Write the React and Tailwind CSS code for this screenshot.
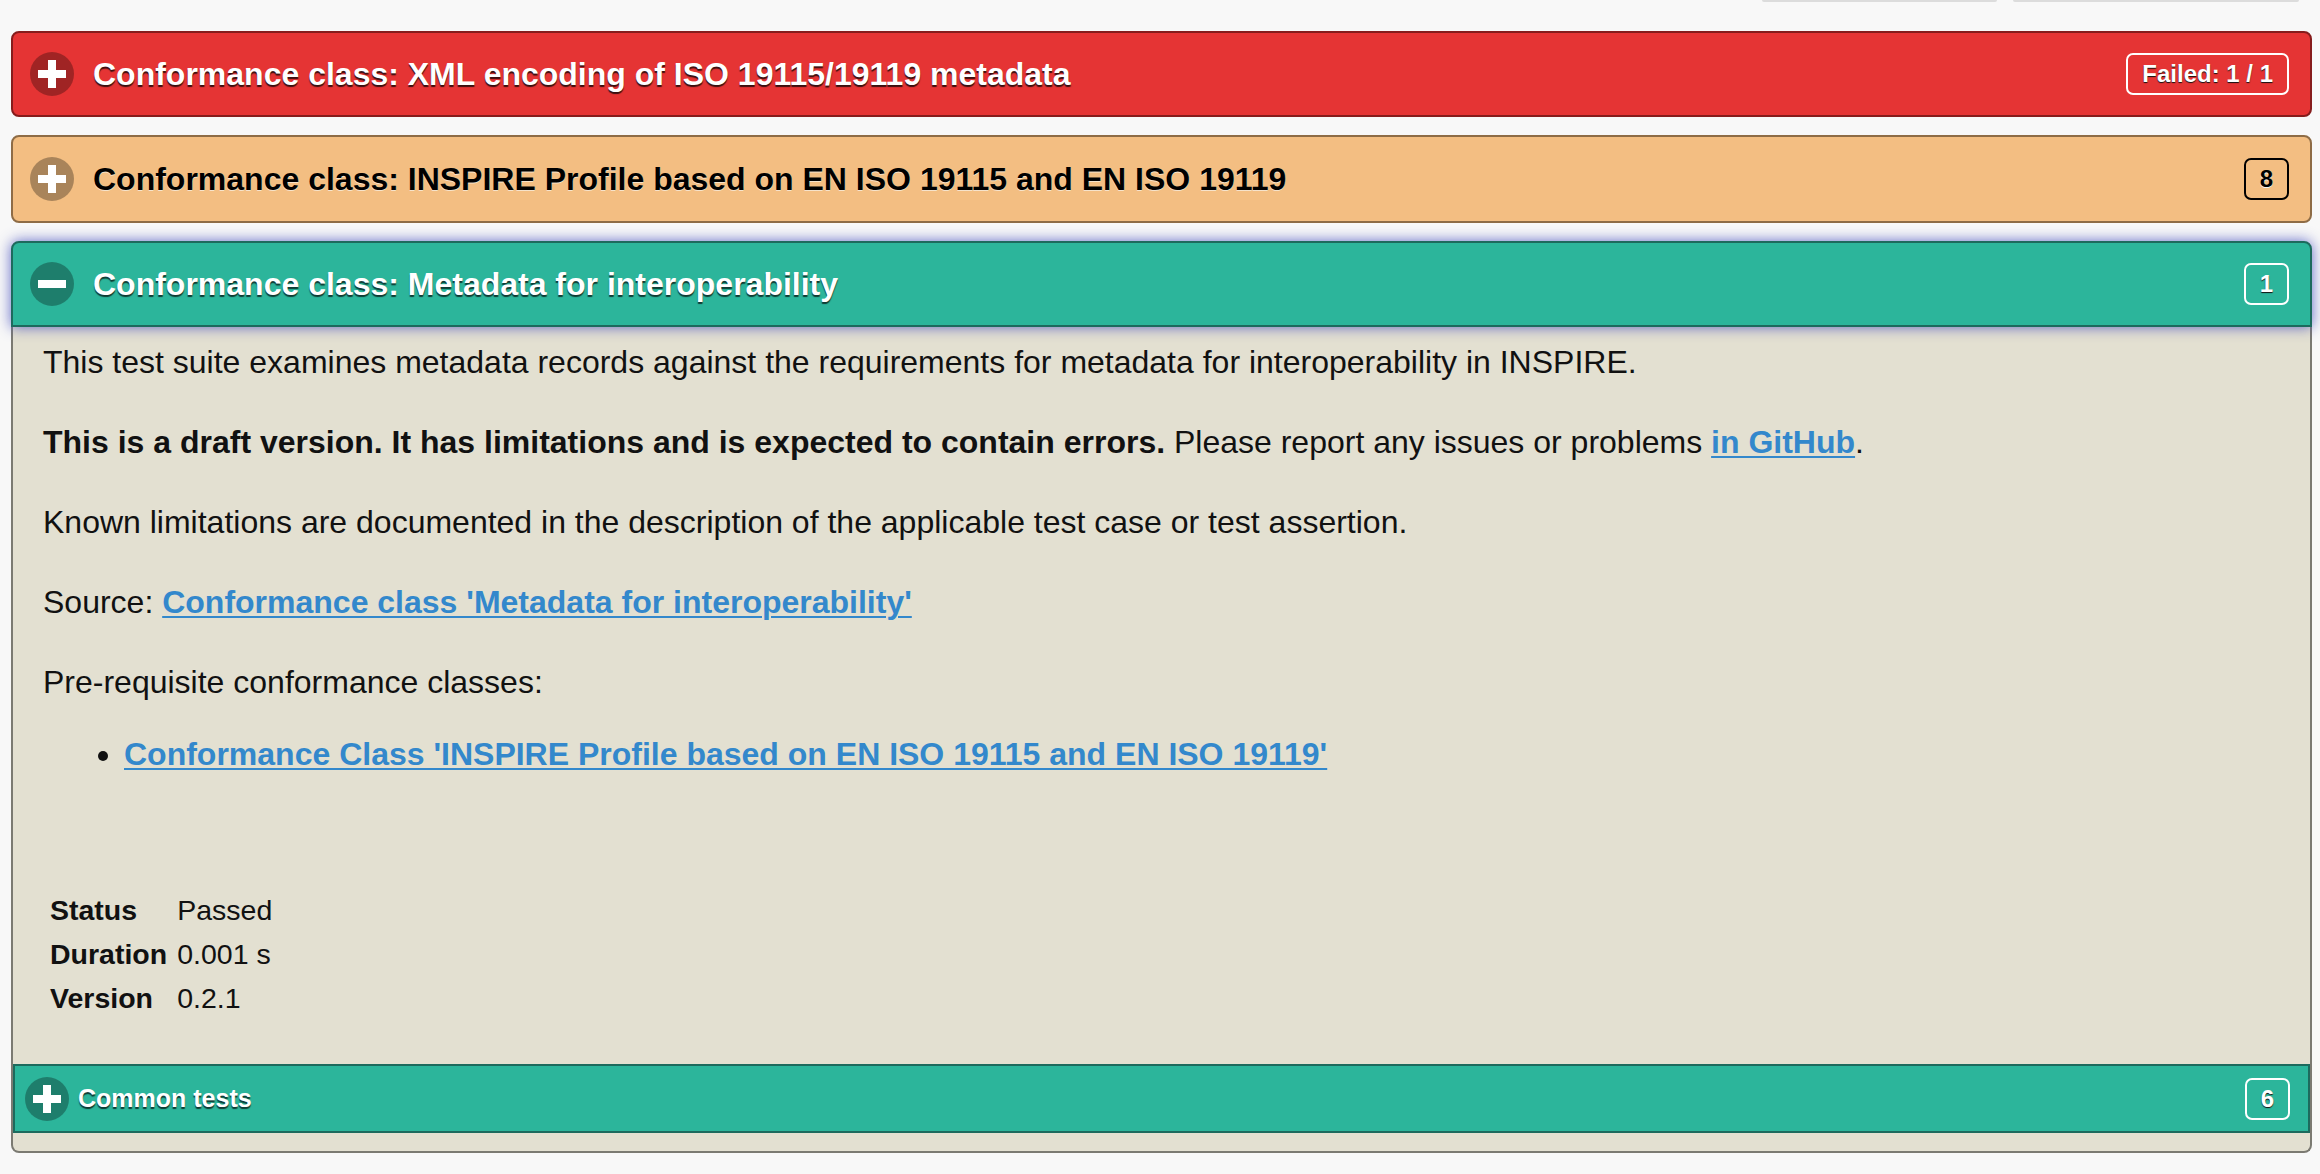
import React from 'react';

const Sign = ({ minus = false, size = 44 }) => (
  <svg width={size} height={size} viewBox="0 0 44 44" className="shrink-0">
    <circle cx="22" cy="22" r="22" fill="rgba(0,0,0,0.3)" />
    <rect x="8" y="18" width="28" height="8" fill="#fff" />
    {!minus && <rect x="18" y="8" width="8" height="28" fill="#fff" />}
  </svg>
);

const Badge = ({ children, dark = false }) => (
  <span
    className={`flex h-[42px] min-w-[42px] items-center justify-center rounded-[7px] border-2 px-[14px] text-[24px] font-bold leading-none ${
      dark
        ? 'border-black text-black [text-shadow:0_1px_0_#f3f3f3]'
        : 'border-white text-white [text-shadow:0_1px_1px_#111]'
    }`}
  >
    {children}
  </span>
);

const linkCls = 'font-bold text-[#3388cc] underline decoration-2 underline-offset-[3px]';

export default function App() {
  return (
    <div className="min-h-screen bg-[#f8f8f8] font-['Liberation_Sans',Arial,sans-serif] text-[#111]">
      {/* cut-off toolbar buttons */}
      <div className="flex h-[2px] justify-end gap-[16px] pr-[21px]">
        <div className="h-[2px] w-[235px] rounded-b-[3px] bg-[#dcdcdc]" />
        <div className="h-[2px] w-[286px] rounded-b-[3px] bg-[#dcdcdc]" />
      </div>

      <div className="pl-[11px] pr-[8px] pt-[29px]">
        {/* Failed class */}
        <div className="flex h-[86px] items-center rounded-[8px] border-2 border-[#861c1c] bg-[#e53434] pl-[17px] pr-[21px]">
          <Sign />
          <h3 className="ml-[19px] flex-1 text-[32px] font-bold leading-none text-white [text-shadow:0_2px_1px_#3a1010]">
            Conformance class: XML encoding of ISO 19115/19119 metadata
          </h3>
          <Badge>Failed: 1 / 1</Badge>
        </div>

        {/* Skipped / warning class */}
        <div className="mt-[18px] flex h-[88px] items-center rounded-[8px] border-2 border-[#8e6c46] bg-[#f3be82] pl-[17px] pr-[21px]">
          <Sign />
          <h3 className="ml-[19px] flex-1 text-[32px] font-bold leading-none text-black [text-shadow:0_1px_0_#f6e3cb]">
            Conformance class: INSPIRE Profile based on EN ISO 19115 and EN ISO 19119
          </h3>
          <Badge dark>8</Badge>
        </div>

        {/* Open class */}
        <div className="mt-[18px]">
          <div className="relative z-10 flex h-[86px] items-center rounded-t-[8px] border-2 border-[#1d6a5d] bg-[#2cb59b] pl-[17px] pr-[21px] shadow-[0_0_14px_rgba(70,80,190,0.85)]">
            <Sign minus />
            <h3 className="ml-[19px] flex-1 text-[32px] font-bold leading-none text-white [text-shadow:0_2px_1px_#0f3b33]">
              Conformance class: Metadata for interoperability
            </h3>
            <Badge>1</Badge>
          </div>

          <div className="rounded-b-[8px] border-2 border-t-0 border-[#7b7a72] bg-[#e3e0d1] pb-[18px] pt-[15px]">
            <div className="px-[30px] text-[32px] leading-[40px]">
              <p className="mb-[40px]">
                This test suite examines metadata records against the requirements for metadata for interoperability in INSPIRE.
              </p>
              <p className="mb-[40px]">
                <b>This is a draft version. It has limitations and is expected to contain errors.</b> Please report any issues or problems{' '}
                <a className={linkCls}>in GitHub</a>.
              </p>
              <p className="mb-[40px]">
                Known limitations are documented in the description of the applicable test case or test assertion.
              </p>
              <p className="mb-[40px]">
                Source: <a className={linkCls}>Conformance class 'Metadata for interoperability'</a>
              </p>
              <p className="mb-[32px]">Pre-requisite conformance classes:</p>
              <ul className="list-disc pl-[81px]">
                <li>
                  <a className={linkCls}>Conformance Class 'INSPIRE Profile based on EN ISO 19115 and EN ISO 19119'</a>
                </li>
              </ul>

              <div className="ml-[7px] mt-[114px] grid grid-cols-[auto_1fr] gap-x-[10px] text-[28.5px] leading-[44px]">
                <span className="font-bold">Status</span>
                <span>Passed</span>
                <span className="font-bold">Duration</span>
                <span>0.001 s</span>
                <span className="font-bold">Version</span>
                <span>0.2.1</span>
              </div>
            </div>

            {/* nested collapsible */}
            <div className="mt-[44px] flex h-[69px] items-center border-2 border-[#1d6a5d] bg-[#2cb59b] pl-[10px] pr-[18px]">
              <Sign />
              <span className="ml-[9px] flex-1 text-[25px] font-bold leading-none text-white [text-shadow:0_2px_1px_#0f3b33]">
                Common tests
              </span>
              <Badge>6</Badge>
            </div>
          </div>
        </div>
      </div>
    </div>
  );
}
